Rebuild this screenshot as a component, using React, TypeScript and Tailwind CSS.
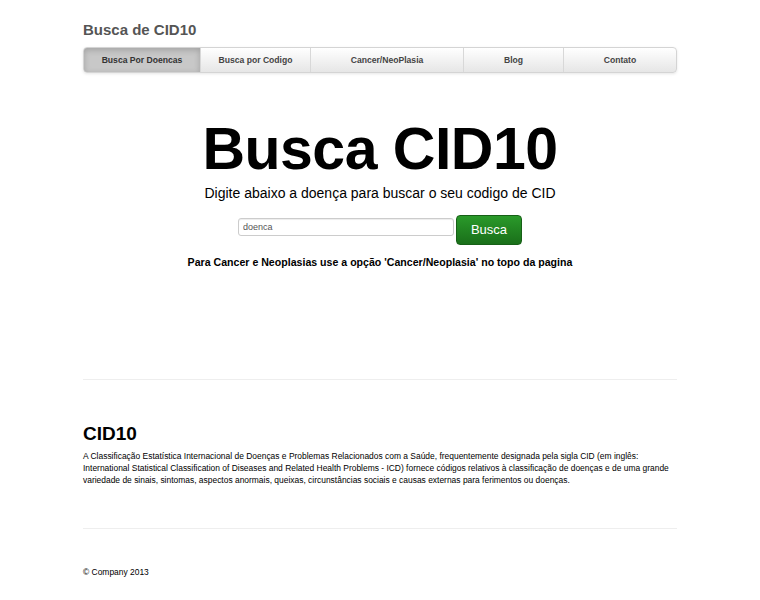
export default function App() {
  const tabs = ["Busca Por Doencas", "Busca por Codigo", "Cancer/NeoPlasia", "Blog", "Contato"];
  const widths = ["w-[116px]", "w-[110px]", "w-[153px]", "w-[100px]", "flex-1"];
  return (
    <div className="w-[760px] h-[600px] bg-white text-[#333]" style={{ fontFamily: '"Liberation Sans", Arial, sans-serif' }}>
      <div className="mx-[83px] w-[594px]">
        <h3 className="pt-[19px] text-[15px] leading-[22px] font-bold text-[#555]">Busca de CID10</h3>
        <div className="mt-[6px] flex h-[26px] rounded-[4px] border border-[#d4d4d4] bg-gradient-to-b from-white to-[#e6e6e6] shadow-[0_1px_3px_rgba(0,0,0,0.1)] overflow-hidden">
          {tabs.map((t, i) => (
            <div
              key={t}
              className={`${widths[i]} flex items-center justify-center text-[8.6px] font-bold ${i > 0 ? "border-l border-[#d8d8d8]" : ""} ${i === 0 ? "bg-[#c8c8c8] text-[#333] shadow-[inset_0_2px_6px_rgba(0,0,0,0.2)]" : "text-[#444]"}`}
            >
              {t}
            </div>
          ))}
        </div>
        <div className="flex flex-col items-center">
          <h1 className="mt-[41px] text-[59px] leading-[70px] font-bold text-black tracking-[-0.5px]">Busca CID10</h1>
          <p className="mt-[0px] text-[14px] leading-[18px] text-black">Digite abaixo a doença para buscar o seu codigo de CID</p>
          <div className="mt-[13px] flex items-start gap-[2px]">
            <input
              defaultValue="doenca"
              className="mt-[3px] w-[216px] h-[18px] border border-[#ccc] rounded-[3px] px-[4px] text-[9px] text-[#555] shadow-[inset_0_1px_1px_rgba(0,0,0,0.075)] outline-none"
            />
            <button className="w-[66px] h-[30px] rounded-[4px] bg-gradient-to-b from-[#2a9a2a] to-[#1a6f1a] border border-[#176017] text-white text-[13px]">Busca</button>
          </div>
          <p className="mt-[10px] text-[10.6px] leading-[14px] font-bold text-black">Para Cancer e Neoplasias use a opção 'Cancer/Neoplasia' no topo da pagina</p>
        </div>
        <hr className="mt-[110px] border-t border-[#eee]" />
        <h2 className="mt-[43px] text-[19px] leading-[22px] font-bold text-black">CID10</h2>
        <p className="mt-[5px] text-[8.45px] leading-[12px] text-black">
          A Classificação Estatística Internacional de Doenças e Problemas Relacionados com a Saúde, frequentemente designada pela sigla CID (em inglês: International Statistical Classification of Diseases and Related Health Problems - ICD) fornece códigos relativos à classificação de doenças e de uma grande variedade de sinais, sintomas, aspectos anormais, queixas, circunstâncias sociais e causas externas para ferimentos ou doenças.
        </p>
        <hr className="mt-[42px] border-t border-[#eee]" />
        <p className="mt-[37px] text-[8.45px] leading-[12px] text-black">© Company 2013</p>
      </div>
    </div>
  );
}
